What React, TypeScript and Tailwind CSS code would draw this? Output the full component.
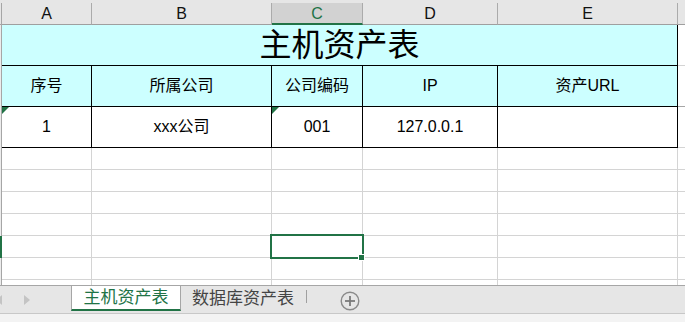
import React from "react";

const FONT = { fontFamily: '"Liberation Sans", "Noto Sans CJK SC", sans-serif' };

const widths = ["w-[90px]", "w-[180px]", "w-[91px]", "w-[135px]", "w-[180px]"];

function Tri() {
  return (
    <div className="absolute left-0 top-0 w-0 h-0 border-t-[7px] border-t-[#217346] border-r-[7px] border-r-transparent" />
  );
}

function RowHead({ green = false }: { green?: boolean }) {
  return (
    <div
      className={
        green
          ? "w-[2px] shrink-0 h-full bg-[#217346]"
          : "w-[2px] shrink-0 h-full bg-[#ececec] border-r border-[#a6a6a6]"
      }
    />
  );
}

function GridRow({ h, selected = false, green = false }: { h: string; selected?: boolean; green?: boolean }) {
  return (
    <div className={`flex shrink-0 ${h}`}>
      <RowHead green={green} />
      {widths.map((w, i) => (
        <div key={i} className={`${w} shrink-0 h-full border-r border-b border-[#d4d4d4] relative`}>
          {selected && i === 2 && (
            <>
              <div className="absolute left-[-2px] top-[-2px] w-[94px] h-[25px] border-2 border-[#217346] z-10" />
              <div className="absolute left-[86px] top-[18px] w-[7px] h-[7px] bg-[#217346] border border-white z-20" />
            </>
          )}
        </div>
      ))}
      <div className="flex-1 h-full border-b border-[#d4d4d4]" />
    </div>
  );
}

export default function App() {
  const headers = ["A", "B", "C", "D", "E"];
  const titles = ["序号", "所属公司", "公司编码", "IP", "资产URL"];
  const data = ["1", "xxx公司", "001", "127.0.0.1", ""];
  return (
    <div className="w-[685px] h-[322px] overflow-hidden flex flex-col bg-white text-[#000]" style={FONT}>
      {/* column header */}
      <div className="flex shrink-0 h-[25px] bg-[#e6e6e6] pt-[3px]">
        <div className="w-[2px] shrink-0 h-full border-r border-b border-[#a6a6a6]" />
        {headers.map((t, i) => (
          <div
            key={t}
            className={
              i === 2
                ? `${widths[i]} shrink-0 h-full flex items-center justify-center bg-[#d2d2d2] border-r border-[#ababab] border-b-2 border-b-[#217346] text-[#217346] text-[16px] pt-[2px]`
                : `${widths[i]} shrink-0 h-full flex items-center justify-center border-r border-[#ababab] border-b border-b-[#9f9f9f] text-[#111] text-[16px]`
            }
          >
            {t}
          </div>
        ))}
        <div className="flex-1 h-full border-b border-[#9f9f9f]" />
      </div>

      {/* title row */}
      <div className="flex shrink-0 h-[41px]">
        <RowHead />
        <div className="w-[676px] shrink-0 h-full bg-[#ccffff] border-r border-b border-black flex items-center justify-center text-[32px] leading-none">
          主机资产表
        </div>
        <div className="flex-1 h-full border-b border-[#d4d4d4]" />
      </div>

      {/* header row */}
      <div className="flex shrink-0 h-[41px]">
        <RowHead />
        {titles.map((t, i) => (
          <div
            key={t}
            className={`${widths[i]} shrink-0 h-full bg-[#ccffff] border-r border-b border-black flex items-center justify-center text-[16px] leading-none`}
          >
            {t}
          </div>
        ))}
        <div className="flex-1 h-full border-b border-[#a6a6a6]" />
      </div>

      {/* data row */}
      <div className="flex shrink-0 h-[41px]">
        <RowHead />
        {data.map((t, i) => (
          <div
            key={i}
            className={`${widths[i]} shrink-0 h-full relative bg-white border-r border-b border-black flex items-center justify-center text-[16px] leading-none`}
          >
            {(i === 0 || i === 2) && <Tri />}
            {t}
          </div>
        ))}
        <div className="flex-1 h-full border-b border-[#d4d4d4]" />
      </div>

      <GridRow h="h-[22px]" />
      <GridRow h="h-[22px]" />
      <GridRow h="h-[22px]" />
      <GridRow h="h-[22px]" />
      <GridRow h="h-[22px]" selected green />
      <GridRow h="h-[22px]" />
      <div className="flex-1 flex">
        <RowHead />
        {widths.map((w, i) => (
          <div key={i} className={`${w} shrink-0 h-full border-r border-[#d4d4d4]`} />
        ))}
      </div>

      {/* sheet tab bar */}
      <div className="shrink-0 h-[28px] bg-[#e6e6e6] border-t border-[#a6a6a6] flex items-start">
        <div className="w-[71px] shrink-0 h-[25px] relative">
          <svg className="absolute left-0 top-[9px]" width="34" height="10" viewBox="0 0 34 10">
            <polygon points="2,0 -4,5 2,10" fill="#c4c4c4" />
            <polygon points="24,0 30,5 24,10" fill="#c4c4c4" />
          </svg>
        </div>
        <div className="w-[110px] shrink-0 h-[25px] bg-white border-l border-r border-[#a6a6a6] border-b-2 border-b-[#217346] flex items-center justify-center text-[17px] text-[#217346] leading-none">
          主机资产表
        </div>
        <div className="h-[24px] flex items-center pl-[11px] text-[17px] text-[#444] leading-none">
          数据库资产表
        </div>
        <div className="ml-[12px] mt-[4px] w-px h-[13px] bg-[#a0a0a0]" />
        <svg className="ml-[33px] mt-[5px]" width="20" height="20" viewBox="0 0 20 20">
          <circle cx="10" cy="10" r="8.8" fill="none" stroke="#8a8a8a" strokeWidth="1.4" />
          <line x1="5" y1="10" x2="15" y2="10" stroke="#7a7a7a" strokeWidth="1.8" />
          <line x1="10" y1="5" x2="10" y2="15" stroke="#7a7a7a" strokeWidth="1.8" />
        </svg>
      </div>
      <div className="shrink-0 h-[9px] bg-[#f3f3f3] border-t border-[#c8c8c8]" />
    </div>
  );
}
